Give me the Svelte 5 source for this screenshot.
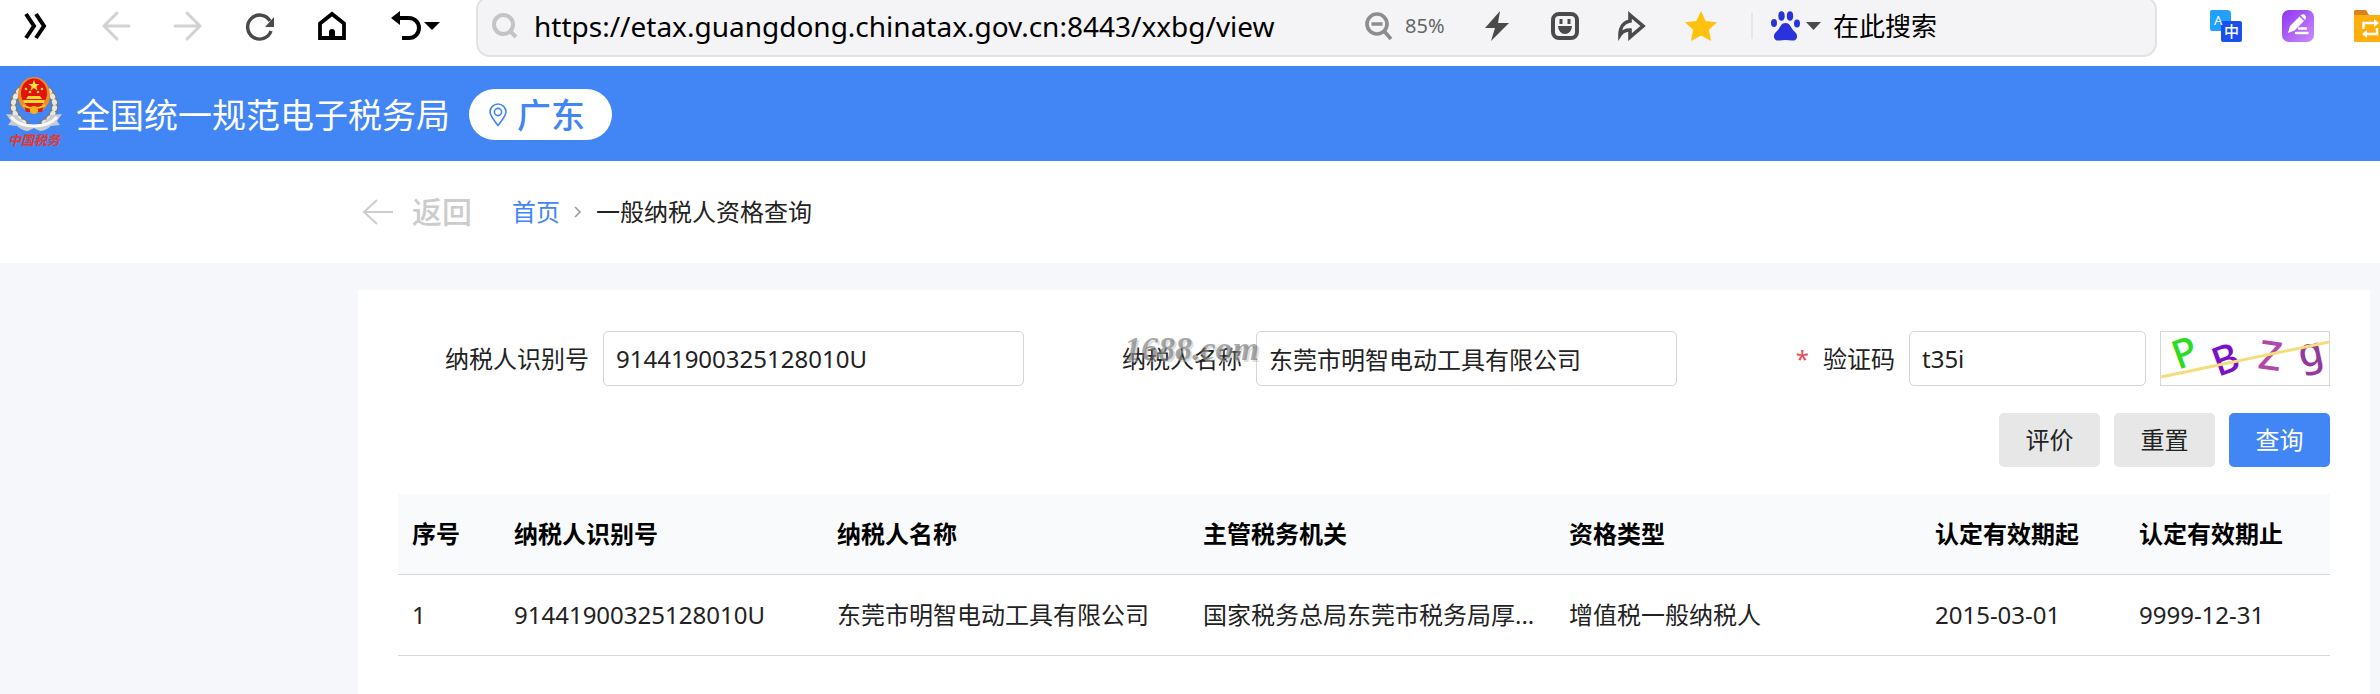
<script>
  let url = 'https://etax.guangdong.chinatax.gov.cn:8443/xxbg/view';
  let keyword = '在此搜索';

  let taxpayerId = '91441900325128010U';
  let taxpayerName = '东莞市明智电动工具有限公司';
  let captcha = 't35i';

  const columns = [
    { key: 'index', label: '序号', size: 102 },
    { key: 'id', label: '纳税人识别号', size: 323 },
    { key: 'name', label: '纳税人名称', size: 366 },
    { key: 'office', label: '主管税务机关', size: 366 },
    { key: 'type', label: '资格类型', size: 366 },
    { key: 'from', label: '认定有效期起', size: 204 },
    { key: 'to', label: '认定有效期止', size: 205 }
  ];
  const total = columns.reduce((sum, c) => sum + c.size, 0);

  const rows = [
    {
      index: '1',
      id: '91441900325128010U',
      name: '东莞市明智电动工具有限公司',
      office: '国家税务总局东莞市税务局厚...',
      type: '增值税一般纳税人',
      from: '2015-03-01',
      to: '9999-12-31'
    }
  ];

  function reset() {
    taxpayerId = '';
    taxpayerName = '';
    captcha = '';
  }
</script>

<div class="page">
  <div class="toolbar">
    <button class="nav first" aria-label="展开">
      <svg width="26" height="28" viewBox="0 0 26 28" fill="none" stroke="#000" stroke-width="4">
        <path d="M3 2l8 12-8 12M13 2l8 12-8 12" />
      </svg>
    </button>
    <button class="nav" aria-label="后退">
      <svg width="30" height="30" viewBox="0 0 30 30" fill="none" stroke="#d2d2d2" stroke-width="3" stroke-linecap="round">
        <path d="M28 15H3M16 2L3 15l13 13" />
      </svg>
    </button>
    <button class="nav" aria-label="前进">
      <svg width="30" height="30" viewBox="0 0 30 30" fill="none" stroke="#d2d2d2" stroke-width="3" stroke-linecap="round">
        <path d="M2 15h25M14 2l13 13-13 13" />
      </svg>
    </button>
    <button class="nav" aria-label="刷新">
      <svg width="30" height="30" viewBox="0 0 30 30">
        <path d="M25 10A12 12 0 1 0 26 20" fill="none" stroke="#4a4a4a" stroke-width="3.4" />
        <path d="M29 6v10h-9z" fill="#4a4a4a" />
      </svg>
    </button>
    <button class="nav" aria-label="主页">
      <svg width="30" height="30" viewBox="0 0 30 30">
        <path d="M3 12.500L15 3l12 9.500V27H3z" fill="none" stroke="#000" stroke-width="3.800" />
        <path d="M12 27v-6a3 3 0 0 1 6 0v6z" fill="#000" />
      </svg>
    </button>
    <button class="nav undo" aria-label="撤销">
      <svg width="50" height="30" viewBox="0 0 50 30">
        <path d="M5 7h13a10 10 0 0 1 0 20H11" fill="none" stroke="#000" stroke-width="4" />
        <path d="M0 7l9-7v14zM33 11h16l-8 8z" fill="#000" />
      </svg>
    </button>

    <div class="address">
      <svg width="26" height="26" viewBox="0 0 26 26" fill="none" stroke="#c4c4c6" stroke-width="4">
        <circle cx="11.500" cy="11.500" r="9.500" />
        <path d="M18 18l6 6" />
      </svg>
      <input class="url" type="text" aria-label="地址" bind:value={url} />
      <button class="tool zoom" aria-label="缩小">
        <svg width="28" height="28" viewBox="0 0 28 28" fill="none" stroke="#8d8d8f" stroke-width="3.600">
          <circle cx="12" cy="12" r="10" />
          <path d="M6.500 12h11M19 19l7 8" />
        </svg>
      </button>
      <span class="percent">85%</span>
      <button class="tool" aria-label="极速模式">
        <svg width="26" height="30" viewBox="0 0 26 30"><path d="M16 0L1 17h10L7 30l18-18H14z" fill="#4a4a4a" /></svg>
      </button>
      <button class="tool" aria-label="表情">
        <svg width="28" height="28" viewBox="0 0 28 28">
          <rect x="2" y="2" width="24" height="24" rx="6" fill="none" stroke="#4a4a4a" stroke-width="4" />
          <path d="M8.500 7h3v5h-3zM16.500 7h3v5h-3zM7 14h14a7 8 0 0 1-14 0z" fill="#4a4a4a" />
        </svg>
      </button>
      <button class="tool" aria-label="分享">
        <svg width="30" height="32" viewBox="0 0 30 32">
          <path d="M12 5l13 11-13 11v-7c-5 0-8 2-10 5 0-8 4-13 10-14z" fill="none" stroke="#4a4a4a" stroke-width="3.600" />
        </svg>
      </button>
      <button class="tool" aria-label="收藏">
        <svg width="32" height="30" viewBox="0 0 32 30">
          <path d="M16 0l4.700 10L32 11.300l-8 7.500L26 30l-10-5.600L6 30l2-11.200-8-7.500L11.300 10z" fill="#ffc20e" />
        </svg>
      </button>
      <span class="divider"></span>
      <button class="engine" aria-label="搜索引擎">
        <svg width="50" height="30" viewBox="0 0 50 30">
          <g fill="#2a32dc">
            <ellipse cx="3" cy="12" rx="3" ry="4" />
            <ellipse cx="10.500" cy="5" rx="3.200" ry="4.800" />
            <ellipse cx="19" cy="5" rx="3.200" ry="4.800" />
            <ellipse cx="26" cy="12.500" rx="3" ry="4" />
            <path d="M14.500 12c5 0 5 5 9 8.500 5 4.500 2 10-3 9-4-.7-8-.7-12 0-5 1-8-4.500-3-9C9.500 17 9.500 12 14.500 12z" />
          </g>
          <path d="M35 11h15l-7.500 8z" fill="#4a4a4a" />
        </svg>
      </button>
      <input class="keyword" type="text" aria-label="搜索" bind:value={keyword} />
    </div>

    <div class="extensions">
      <button aria-label="翻译">
        <svg width="32" height="32" viewBox="0 0 32 32">
          <path d="M2 0h15a4 4 0 0 1 4 4v17H2a2 2 0 0 1-2-2V2a2 2 0 0 1 2-2z" fill="#22a0ff" />
          <rect x="11" y="11" width="21" height="21" rx="2" fill="#1c50ee" />
          <text x="4" y="15" font-size="13" fill="#fff">A</text>
          <text x="14" y="27" font-size="15" font-weight="500" fill="#fff">中</text>
        </svg>
      </button>
      <button aria-label="批注">
        <svg width="32" height="32" viewBox="0 0 32 32">
          <defs>
            <linearGradient id="violet" x1="0" y1="0" x2="1" y2="1">
              <stop offset="0" stop-color="#8e35f2" />
              <stop offset="1" stop-color="#cb8dfb" />
            </linearGradient>
          </defs>
          <rect width="32" height="32" rx="7" fill="url(#violet)" />
          <path d="M6 23l2-7L17.500 6.500l4.500 4.500L12.500 20.500zM18.500 5.500l1.500-1a3 3 0 0 1 3.500 4.500L23 10z" fill="#fff" />
          <path d="M17 18.500h7M14 23h11.500" stroke="#fff" stroke-width="2.400" stroke-linecap="round" />
        </svg>
      </button>
      <button aria-label="文件夹">
        <svg width="32" height="32" viewBox="0 0 32 32">
          <path d="M1 0h11l3 5h17v8H0V1z" fill="#d98218" />
          <path d="M0 5h32v27H1a1 1 0 0 1-1-1z" fill="#ffae0c" />
          <path d="M9.500 19v-6H22M23 18v6H11" fill="none" stroke="#fff" stroke-width="2.400" />
          <path d="M20 9l5 4-5 4zM13 20l-5 4 5 4z" fill="#fff" />
        </svg>
      </button>
    </div>
  </div>

  <header class="banner">
    <svg class="emblem" width="56" height="76" viewBox="0 0 56 76">
      <g fill="none" stroke-linecap="round">
        <path d="M13 14C4 25 5 39 20 47M43 14c9 11 8 25-7 33" stroke="#777b76" stroke-width="7" />
        <path d="M13 14C4 25 5 39 20 47M43 14c9 11 8 25-7 33" stroke="#e6e8e2" stroke-width="5" stroke-dasharray="1 5" />
      </g>
      <path d="M0 37l11 1c4 7 10 10 17 10s13-3 17-10l11-1-5 7 3 4-9 1c-4 4-9 5-11 5l-6-3-6 3c-2 0-7-1-11-5l-9-1 3-4z" fill="#c9ccd0" />
      <path d="M5 40c10 12 36 12 46 0" fill="none" stroke="#f8f8f8" stroke-width="3" />
      <ellipse cx="28" cy="18" rx="16" ry="18" fill="#f08c20" />
      <ellipse cx="28" cy="16" rx="13" ry="14.500" fill="#e0140c" />
      <path d="M28 3l1.500 4h4l-3.200 2.400 1.200 4L28 11l-3.500 2.400 1.200-4L22.500 7h4z" fill="#ffe33a" />
      <g fill="#ffd930">
        <circle cx="20" cy="12" r="1.300" />
        <circle cx="36" cy="12" r="1.300" />
        <circle cx="24" cy="15" r="1.300" />
        <circle cx="32" cy="15" r="1.300" />
        <path d="M22 19h12l2 3H20zM17 23h22l-1 3H18z" />
      </g>
      <path d="M18 28h20l-2 7H20z" fill="#d91e0e" />
      <path d="M17 28c6 4 16 4 22 0" fill="none" stroke="#ffc928" stroke-width="2" />
      <circle cx="28" cy="33" r="4" fill="#f6b21c" />
      <text x="28" y="68" font-size="13" font-weight="700" font-style="italic" text-anchor="middle" fill="#e2382c">中国税务</text>
    </svg>
    <h1>全国统一规范电子税务局</h1>
    <button class="region">
      <svg width="18" height="24" viewBox="0 0 18 24" fill="none" stroke="#4285f4" stroke-width="1.600">
        <path d="M9 22.500C4 16 1 12.500 1 9a8 8 0 0 1 16 0c0 3.500-3 7-8 13.500z" />
        <circle cx="9" cy="9" r="3.600" />
      </svg>
      <span>广东</span>
    </button>
  </header>

  <nav class="crumbs">
    <button class="back">
      <svg width="32" height="28" viewBox="0 0 32 28" fill="none" stroke="#ccc" stroke-width="2">
        <path d="M31 14H2M15 2L2 14l13 12" />
      </svg>
      <span>返回</span>
    </button>
    <a href="#home">首页</a>
    <svg width="8" height="12" viewBox="0 0 8 12" fill="none" stroke="#999" stroke-width="1.500">
      <path d="M1 1l5 5-5 5" />
    </svg>
    <span>一般纳税人资格查询</span>
  </nav>

  <main class="content">
    <section class="card">
      <form on:submit|preventDefault>
        <div class="fields">
          <div class="field">
            <label for="taxpayer-id">纳税人识别号</label>
            <input id="taxpayer-id" type="text" bind:value={taxpayerId} />
          </div>
          <div class="field">
            <label for="taxpayer-name">纳税人名称</label>
            <input id="taxpayer-name" type="text" bind:value={taxpayerName} />
            <span class="watermark">1688.com</span>
          </div>
          <div class="field">
            <label for="captcha"><em>*</em>验证码</label>
            <div class="verify">
              <input id="captcha" type="text" bind:value={captcha} />
              <svg width="170" height="55" viewBox="0 0 170 55">
                <rect x="0.500" y="0.500" width="169" height="54" fill="#fff" stroke="#d5d5d5" />
                <g font-size="40" font-weight="500">
                  <text transform="translate(18 39) rotate(-20)" fill="#2bdc1e">P</text>
                  <text transform="translate(58 46) rotate(-20)" fill="#7a10c8">B</text>
                  <text transform="translate(97 37) rotate(8)" fill="#b04aa8">Z</text>
                  <text transform="translate(141 37) rotate(-12)" fill="#943a9e">g</text>
                </g>
                <path d="M1 46L169 11" stroke="#f5dd7c" stroke-width="3" />
              </svg>
            </div>
          </div>
        </div>
        <div class="actions">
          <button type="button">评价</button>
          <button type="button" on:click={reset}>重置</button>
          <button type="submit" class="primary">查询</button>
        </div>
      </form>

      <table>
        <colgroup>
          {#each columns as col}
            <col style="width: {(col.size / total) * 100}%" />
          {/each}
        </colgroup>
        <thead>
          <tr>
            {#each columns as col}
              <th>{col.label}</th>
            {/each}
          </tr>
        </thead>
        <tbody>
          {#each rows as row}
            <tr>
              {#each columns as col}
                <td>{row[col.key]}</td>
              {/each}
            </tr>
          {/each}
        </tbody>
      </table>
    </section>
  </main>
</div>

<style>
  :global(body) {
    background: #f5f7fa;
  }

  .page {
    display: flex;
    flex-direction: column;
    min-height: 100vh;
    overflow: hidden;
    font-family: 'Noto Sans', 'Noto Sans CJK SC', sans-serif;
    font-size: 24px;
    line-height: 32px;
    color: #222;
  }

  svg {
    display: block;
    flex: none;
    overflow: visible;
  }

  button {
    display: flex;
    align-items: center;
    justify-content: center;
    padding: 0;
    border: none;
    background: none;
    font: inherit;
    color: inherit;
    cursor: pointer;
  }

  input {
    box-sizing: border-box;
    min-width: 0;
    font: inherit;
    color: inherit;
  }

  input:focus {
    outline: none;
    border-color: #4285f4;
  }

  .toolbar {
    display: flex;
    align-items: center;
    box-sizing: border-box;
    height: 66px;
    padding-bottom: 14px;
    background: #fff;
  }

  .nav {
    flex: none;
    width: 72px;
  }

  .first {
    margin-right: 8px;
  }

  .undo {
    width: 96px;
    margin-right: 12px;
  }

  .address {
    display: flex;
    flex: 1;
    align-items: center;
    box-sizing: border-box;
    min-width: 0;
    height: 61px;
    padding-left: 14px;
    border: 2px solid #e2e2e6;
    border-radius: 14px;
    background: #f4f4f6;
  }

  .address input {
    padding: 0;
    border: none;
    background: none;
    color: #000;
  }

  .address .url {
    flex: 1;
    height: 44px;
    margin-left: 16px;
    font-size: 28px;
  }

  .tool {
    flex: none;
    width: 68px;
  }

  .zoom {
    width: 28px;
    margin-left: 80px;
  }

  .percent {
    width: 58px;
    margin-left: 12px;
    font-size: 20px;
    color: #666;
  }

  .divider {
    width: 2px;
    height: 26px;
    margin: 0 18px 0 16px;
    background: #e6e6ea;
  }

  .address .keyword {
    width: 322px;
    margin-left: 12px;
    font-size: 26px;
  }

  .extensions {
    display: flex;
    flex: none;
    gap: 40px;
    width: 170px;
    margin-left: 53px;
    overflow: hidden;
  }

  .banner {
    display: flex;
    align-items: center;
    box-sizing: border-box;
    height: 95px;
    padding: 2px 0 0 6px;
    background: #4285f4;
    color: #fff;
  }

  h1 {
    margin: 0 19px 0 14px;
    font-size: 34px;
    font-weight: 400;
    line-height: 48px;
  }

  .region {
    justify-content: flex-start;
    gap: 10px;
    width: 143px;
    height: 51px;
    padding-left: 20px;
    border-radius: 26px;
    background: #fff;
    color: #4285f4;
    font-size: 34px;
    font-weight: 500;
  }

  .crumbs {
    display: flex;
    align-items: center;
    gap: 14px;
    height: 102px;
    padding-left: 362px;
    background: #fff;
  }

  .back {
    gap: 18px;
    margin-right: 26px;
    color: #ccc;
    font-size: 30px;
    font-weight: 500;
  }

  .crumbs a {
    color: #4285f4;
    text-decoration: none;
  }

  .content {
    display: flex;
    flex: 1;
    padding: 27px 10px 0 358px;
    background: #f5f7fa;
  }

  .card {
    flex: 1;
    min-width: 0;
    padding: 41px 40px 0;
    background: #fff;
  }

  .fields {
    display: grid;
    grid-template-columns: repeat(3, 1fr);
    margin-left: -27px;
  }

  .field {
    position: relative;
    display: grid;
    grid-template-columns: 232px 1fr;
    align-items: center;
  }

  label {
    padding-right: 14px;
    text-align: right;
  }

  em {
    margin-right: 14px;
    color: #e34d59;
    font-style: normal;
  }

  .field input {
    width: 100%;
    height: 55px;
    padding: 0 12px;
    border: 1px solid #d5d5d5;
    border-radius: 5px;
    background: #fff;
  }

  .verify {
    display: flex;
    gap: 14px;
  }

  .verify input {
    flex: 1;
  }

  .watermark {
    position: absolute;
    top: 2px;
    left: 100px;
    font-family: 'Liberation Serif', serif;
    font-size: 34px;
    font-style: italic;
    font-weight: 700;
    color: rgba(110, 110, 110, 0.6);
    text-shadow: 2px 2px 0 rgba(190, 190, 190, 0.5);
    pointer-events: none;
  }

  .actions {
    display: flex;
    justify-content: flex-end;
    gap: 14px;
    margin: 27px 0;
  }

  .actions button {
    width: 101px;
    height: 54px;
    border-radius: 5px;
    background: #e7e7e7;
  }

  .actions .primary {
    background: #4285f4;
    color: #fff;
  }

  table {
    width: 100%;
    table-layout: fixed;
    border-collapse: collapse;
  }

  th,
  td {
    height: 80px;
    padding: 0 14px;
    border-bottom: 1px solid #d5d8dc;
    overflow: hidden;
    text-align: left;
    text-overflow: ellipsis;
    white-space: nowrap;
  }

  th {
    background: #f9fafc;
    color: #000;
    font-weight: 700;
  }
</style>
